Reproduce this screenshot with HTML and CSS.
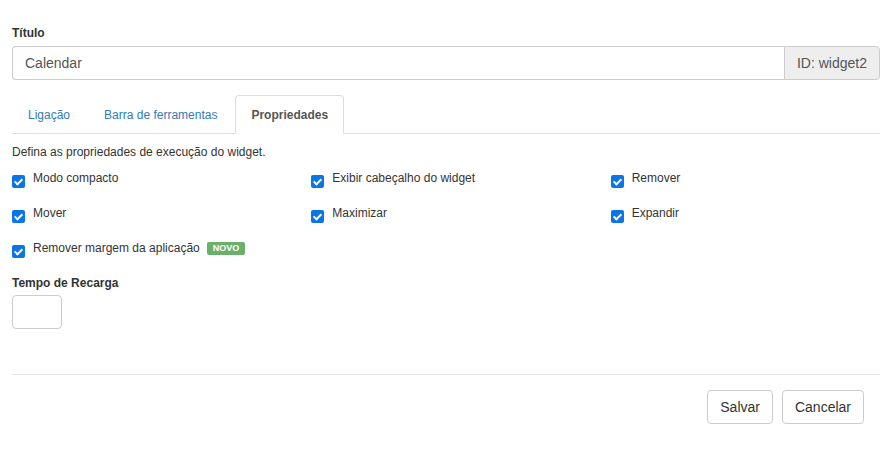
FILE: index.html
```html
<!DOCTYPE html>
<html>
<head>
<meta charset="utf-8">
<link rel="stylesheet" href="styles.css">
</head>
<body>
<div class="panel">
  <div class="field">
    <label class="lbl">Título</label>
    <div class="input-group">
      <div class="input">Calendar</div>
      <div class="addon">ID: widget2</div>
    </div>
  </div>
  <ul class="tabs">
    <li class="tab"><a>Ligação</a></li>
    <li class="tab"><a>Barra de ferramentas</a></li>
    <li class="tab active"><a>Propriedades</a></li>
  </ul>
  <p class="desc">Defina as propriedades de execução do widget.</p>
  <div class="checks">
    <label class="chk"><span class="box"></span>Modo compacto</label>
    <label class="chk"><span class="box"></span>Exibir cabeçalho do widget</label>
    <label class="chk"><span class="box"></span>Remover</label>
    <label class="chk"><span class="box"></span>Mover</label>
    <label class="chk"><span class="box"></span>Maximizar</label>
    <label class="chk"><span class="box"></span>Expandir</label>
    <label class="chk"><span class="box"></span>Remover margem da aplicação <span class="badge">NOVO</span></label>
  </div>
  <label class="lbl lbl2">Tempo de Recarga</label>
  <div class="small-input"></div>
  <div class="footer">
    <button class="btn">Salvar</button>
    <button class="btn">Cancelar</button>
  </div>
</div>
</body>
</html>
```
FILE: styles.css
```css
html, body { margin: 0; padding: 0; background: #fff; }
body { font-family: "Liberation Sans", Arial, sans-serif; color: #333; font-size: 12px; }
.panel { padding: 26px 14px 0 12px; width: 868px; }
.lbl { display: block; font-weight: bold; font-size: 12px; line-height: 14px; margin-bottom: 6px; }
.input-group { display: flex; height: 34px; }
.input { flex: 1; border: 1px solid #ccc; border-right: none; border-radius: 4px 0 0 4px; padding: 0 12px; font-size: 14px; line-height: 32px; color: #555; }
.addon { border: 1px solid #ccc; border-radius: 0 4px 4px 0; background: #eee; padding: 0 12px; font-size: 14px; line-height: 32px; color: #555; }
.tabs { list-style: none; margin: 15px 0 0; padding: 0; display: flex; border-bottom: 1px solid #ddd; height: 38px; }
.tab a { display: block; padding: 0 15px; line-height: 38px; color: #337ab7; font-size: 12px; border: 1px solid transparent; border-radius: 4px 4px 0 0; box-sizing: border-box; height: 39px; }
.tab:nth-child(2) a { padding: 0 17px; }
.tab.active a { color: #555; font-weight: bold; background: #fff; border-color: #ddd; border-bottom-color: #fff; }
.desc { margin: 11px 0 0; line-height: 14px; }
.checks { display: grid; grid-template-columns: repeat(3, 1fr); column-gap: 30px; row-gap: 0; margin-top: 12px; }
.chk { display: flex; align-items: flex-start; height: 35px; line-height: 15px; }
.box { width: 13px; height: 13px; border-radius: 2px; background: #0b75e5; margin: 4px 8px 0 0; flex: none; position: relative; }
.box::after { content: ""; position: absolute; left: 4px; top: 1.5px; width: 3px; height: 6px; border: solid #fff; border-width: 0 2px 2px 0; transform: rotate(45deg); }
.badge { display: inline-block; background: #6ab06a; color: #fff; font-weight: bold; font-size: 9px; line-height: 13px; padding: 0 6px; border-radius: 2px; margin-left: 7px; margin-top: 1px; }
.lbl2 { margin-top: 0; }
.small-input { width: 48px; height: 32px; border: 1px solid #ccc; border-radius: 4px; margin-top: -1px; }
.footer { margin-top: 45px; border-top: 1px solid #e5e5e5; padding: 15px 16px 0 0; display: flex; justify-content: flex-end; gap: 9px; }
.btn { font-family: "Liberation Sans", Arial, sans-serif; font-size: 14px; color: #333; background: #fff; border: 1px solid #ccc; border-radius: 4px; height: 34px; padding: 0 12px; }
```
